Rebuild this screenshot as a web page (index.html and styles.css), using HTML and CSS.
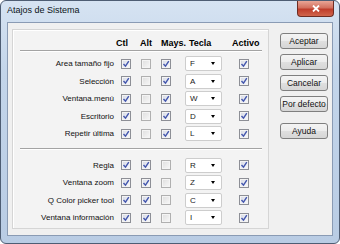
FILE: index.html
```html
<html lang="es">
  <head>
    <meta charset="UTF-8" />
    <link rel="stylesheet" href="styles.css">
    <title>Atajos de Sistema</title>
  </head>
  <body>
    <div class="window">
      <header class="titlebar">
        <span class="title">Atajos de Sistema</span>
        <button class="close">
          <svg width="8" height="7" viewBox="0 0 8 7"><path d="M1 0.5L7 6.5M7 0.5L1 6.5" stroke="#fff" stroke-width="1.8"/></svg>
        </button>
      </header>

      <main class="client">
        <section class="panel">
          <div class="row head">
            <span></span>
            <span class="h-ctl">Ctl</span>
            <span class="h-alt">Alt</span>
            <span class="h-mays">Mays.</span>
            <span class="h-tecla">Tecla</span>
            <span class="h-activo">Activo</span>
          </div>
          <div class="rule"></div>

          <div class="group first">
            <div class="row">
              <span class="label">Area tamaño fijo</span>
              <span class="cb on"><svg viewBox="0 0 8 8"><path d="M1.5 4l2 2.2L6.8 1.2"/></svg></span>
              <span class="cb"></span>
              <span class="cb on"><svg viewBox="0 0 8 8"><path d="M1.5 4l2 2.2L6.8 1.2"/></svg></span>
              <span class="combo">F<i></i></span>
              <span class="cb on"><svg viewBox="0 0 8 8"><path d="M1.5 4l2 2.2L6.8 1.2"/></svg></span>
            </div>
            <div class="row">
              <span class="label">Selección</span>
              <span class="cb on"><svg viewBox="0 0 8 8"><path d="M1.5 4l2 2.2L6.8 1.2"/></svg></span>
              <span class="cb"></span>
              <span class="cb on"><svg viewBox="0 0 8 8"><path d="M1.5 4l2 2.2L6.8 1.2"/></svg></span>
              <span class="combo">A<i></i></span>
              <span class="cb on"><svg viewBox="0 0 8 8"><path d="M1.5 4l2 2.2L6.8 1.2"/></svg></span>
            </div>
            <div class="row">
              <span class="label">Ventana.menú</span>
              <span class="cb on"><svg viewBox="0 0 8 8"><path d="M1.5 4l2 2.2L6.8 1.2"/></svg></span>
              <span class="cb"></span>
              <span class="cb on"><svg viewBox="0 0 8 8"><path d="M1.5 4l2 2.2L6.8 1.2"/></svg></span>
              <span class="combo">W<i></i></span>
              <span class="cb on"><svg viewBox="0 0 8 8"><path d="M1.5 4l2 2.2L6.8 1.2"/></svg></span>
            </div>
            <div class="row">
              <span class="label">Escritorio</span>
              <span class="cb on"><svg viewBox="0 0 8 8"><path d="M1.5 4l2 2.2L6.8 1.2"/></svg></span>
              <span class="cb"></span>
              <span class="cb on"><svg viewBox="0 0 8 8"><path d="M1.5 4l2 2.2L6.8 1.2"/></svg></span>
              <span class="combo">D<i></i></span>
              <span class="cb on"><svg viewBox="0 0 8 8"><path d="M1.5 4l2 2.2L6.8 1.2"/></svg></span>
            </div>
            <div class="row">
              <span class="label">Repetir última</span>
              <span class="cb on"><svg viewBox="0 0 8 8"><path d="M1.5 4l2 2.2L6.8 1.2"/></svg></span>
              <span class="cb"></span>
              <span class="cb on"><svg viewBox="0 0 8 8"><path d="M1.5 4l2 2.2L6.8 1.2"/></svg></span>
              <span class="combo">L<i></i></span>
              <span class="cb on"><svg viewBox="0 0 8 8"><path d="M1.5 4l2 2.2L6.8 1.2"/></svg></span>
            </div>
          </div>
          <div class="rule"></div>

          <div class="group second">
            <div class="row">
              <span class="label">Regla</span>
              <span class="cb on"><svg viewBox="0 0 8 8"><path d="M1.5 4l2 2.2L6.8 1.2"/></svg></span>
              <span class="cb on"><svg viewBox="0 0 8 8"><path d="M1.5 4l2 2.2L6.8 1.2"/></svg></span>
              <span class="cb"></span>
              <span class="combo">R<i></i></span>
              <span class="cb on"><svg viewBox="0 0 8 8"><path d="M1.5 4l2 2.2L6.8 1.2"/></svg></span>
            </div>
            <div class="row">
              <span class="label">Ventana zoom</span>
              <span class="cb on"><svg viewBox="0 0 8 8"><path d="M1.5 4l2 2.2L6.8 1.2"/></svg></span>
              <span class="cb on"><svg viewBox="0 0 8 8"><path d="M1.5 4l2 2.2L6.8 1.2"/></svg></span>
              <span class="cb"></span>
              <span class="combo">Z<i></i></span>
              <span class="cb on"><svg viewBox="0 0 8 8"><path d="M1.5 4l2 2.2L6.8 1.2"/></svg></span>
            </div>
            <div class="row">
              <span class="label">Q Color picker tool</span>
              <span class="cb on"><svg viewBox="0 0 8 8"><path d="M1.5 4l2 2.2L6.8 1.2"/></svg></span>
              <span class="cb on"><svg viewBox="0 0 8 8"><path d="M1.5 4l2 2.2L6.8 1.2"/></svg></span>
              <span class="cb"></span>
              <span class="combo">C<i></i></span>
              <span class="cb on"><svg viewBox="0 0 8 8"><path d="M1.5 4l2 2.2L6.8 1.2"/></svg></span>
            </div>
            <div class="row">
              <span class="label">Ventana información</span>
              <span class="cb on"><svg viewBox="0 0 8 8"><path d="M1.5 4l2 2.2L6.8 1.2"/></svg></span>
              <span class="cb on"><svg viewBox="0 0 8 8"><path d="M1.5 4l2 2.2L6.8 1.2"/></svg></span>
              <span class="cb"></span>
              <span class="combo">I<i></i></span>
              <span class="cb on"><svg viewBox="0 0 8 8"><path d="M1.5 4l2 2.2L6.8 1.2"/></svg></span>
            </div>
          </div>
        </section>

        <aside class="buttons">
          <button class="btn">Aceptar</button>
          <button class="btn">Aplicar</button>
          <button class="btn">Cancelar</button>
          <button class="btn">Por defecto</button>
          <button class="btn help">Ayuda</button>
        </aside>
      </main>
    </div>
  </body>
</html>
```

FILE: styles.css
```css
*,
*::after,
*::before {
  margin: 0;
  padding: 0;
  box-sizing: border-box;
}

body {
  width: 340px;
  height: 244px;
  font-family: "Liberation Sans", Arial, sans-serif;
  font-size: 8px;
  color: #000;
  background: #fff;
}

.window {
  width: 340px;
  height: 244px;
  display: flex;
  flex-direction: column;
  padding: 0 6px 7px 6px;
  border: 1px solid #4e5d73;
  border-radius: 6px;
  background: linear-gradient(#d6e3f2, #c3d5ea 30%, #b9cce4);
}

/* title bar */
.titlebar {
  height: 21px;
  display: flex;
  justify-content: space-between;
  align-items: flex-start;
}
.titlebar .title {
  margin-top: 4px;
  font-size: 9px;
  color: #0c1420;
}
.close {
  width: 37px;
  height: 16px;
  margin-right: -1px;
  display: flex;
  justify-content: center;
  align-items: center;
  border: 1px solid #6e2c22;
  border-top: none;
  border-radius: 0 0 4px 4px;
  background: linear-gradient(#e9a596, #d2705e 45%, #bf3d2b 55%, #d0654c);
}

/* client area */
.client {
  flex: 1;
  display: flex;
  gap: 11px;
  padding: 6px 4px 6px 4px;
  border: 1px solid #8a9bb4;
  background: #f0f0f0;
}

.panel {
  width: 257px;
  border: 1px solid #d5d5d5;
  box-shadow: inset 1px 1px #fff;
  background: #f3f3f3;
}

.row {
  display: grid;
  grid-template-columns: 105px 20px 20px 25px 53px 1fr;
  align-items: center;
  height: 17.5px;
}
.row.head {
  height: 20px;
  padding-top: 5px;
  font-size: 9px;
  font-weight: bold;
  white-space: nowrap;
}
.h-ctl { margin-left: -2px; }
.h-alt { margin-left: 2px; }
.h-mays { margin-left: 3px; }
.h-tecla { margin-left: 6px; }
.h-activo { margin-left: -4px; }

.rule {
  margin: 0 6px 0 7px;
  height: 2px;
  border-top: 1px solid #a3a3a3;
  border-bottom: 1px solid #fff;
}

.group.first {
  padding: 3px 0 5px;
}
.group.second {
  padding-top: 7px;
}

.label {
  text-align: right;
  padding-right: 4px;
  white-space: nowrap;
  color: #111;
}

/* checkboxes */
.cb {
  width: 10px;
  height: 10px;
  margin-left: 3px;
  border: 1px solid #b0b0b0;
  background: linear-gradient(135deg, #dedede, #f8f8f8);
  box-shadow: inset 0 0 0 1px #f4f4f4;
  display: flex;
  justify-content: center;
  align-items: center;
}
.cb.on {
  border-color: #8d8f96;
  background: linear-gradient(135deg, #d4d8e4, #fbfbfd);
}
.cb svg {
  width: 8px;
  height: 8px;
  fill: none;
  stroke: #4356ad;
  stroke-width: 1.4;
}

/* key combo */
.combo {
  width: 37px;
  height: 15px;
  margin-left: 2px;
  padding-left: 4px;
  display: flex;
  align-items: center;
  border: 1px solid #cdcdcd;
  border-radius: 2px;
  background: #fff;
  color: #222;
}
.combo i {
  margin-left: auto;
  margin-right: 6px;
  width: 0;
  height: 0;
  border-left: 2.5px solid transparent;
  border-right: 2.5px solid transparent;
  border-top: 3px solid #000;
}

/* buttons */
.buttons {
  width: 48px;
  display: flex;
  flex-direction: column;
  gap: 5px;
  padding-top: 4px;
}
.btn {
  height: 16px;
  border: 1px solid #7f7f7f;
  border-radius: 3px;
  background: linear-gradient(#f4f4f4, #ececec 50%, #dfdfdf 51%, #d6d6d6);
  font-family: "Liberation Sans", Arial, sans-serif;
  font-size: 8.5px;
  color: #111;
}
.btn.help {
  margin-top: 6px;
}
```
